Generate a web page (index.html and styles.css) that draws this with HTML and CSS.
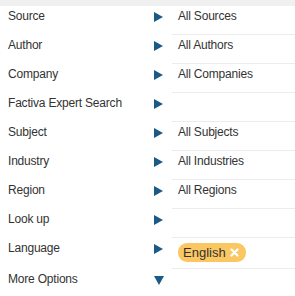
FILE: index.html
```html
<!DOCTYPE html>
<html lang="en">
<head>
  <meta charset="UTF-8">
  <title>Search options</title>
  <link rel="stylesheet" href="styles.css">
</head>
<body>
  <div class="topbar"></div>

  <div class="options">
    <div class="row">
      <span class="label">Source</span>
      <span class="arrow right"></span>
      <span class="value">All Sources</span>
    </div>
    <div class="row">
      <span class="label">Author</span>
      <span class="arrow right"></span>
      <span class="value">All Authors</span>
    </div>
    <div class="row">
      <span class="label">Company</span>
      <span class="arrow right"></span>
      <span class="value">All Companies</span>
    </div>
    <div class="row">
      <span class="label">Factiva Expert Search</span>
      <span class="arrow right"></span>
      <span class="value"></span>
    </div>
    <div class="row">
      <span class="label">Subject</span>
      <span class="arrow right"></span>
      <span class="value">All Subjects</span>
    </div>
    <div class="row">
      <span class="label">Industry</span>
      <span class="arrow right"></span>
      <span class="value">All Industries</span>
    </div>
    <div class="row">
      <span class="label">Region</span>
      <span class="arrow right"></span>
      <span class="value">All Regions</span>
    </div>
    <div class="row">
      <span class="label">Look up</span>
      <span class="arrow right"></span>
      <span class="value"></span>
    </div>
    <div class="row tall">
      <span class="label">Language</span>
      <span class="arrow right"></span>
      <span class="value">
        <span class="pill">English
          <svg class="close" width="9" height="9" viewBox="0 0 9 9">
            <path d="M1.5 1.5 L7.5 7.5 M7.5 1.5 L1.5 7.5" stroke="#fff" stroke-width="2.4" stroke-linecap="round"/>
          </svg>
        </span>
      </span>
    </div>
    <div class="row last">
      <span class="label">More Options</span>
      <span class="arrow down"></span>
      <span class="value"></span>
    </div>
  </div>
</body>
</html>
```

FILE: styles.css
```css
body {
  margin: 0;
  font-family: "Liberation Sans", Arial, sans-serif;
  font-size: 12px;
  letter-spacing: -0.2px;
  color: #333;
  background-color: #fff;
}

.topbar {
  height: 6px;
  background-color: #f0f0f0;
}

.row {
  display: grid;
  grid-template-columns: 150px 22px 1fr;
  height: 29px;
}

.row.tall {
  height: 31px;
}

.label {
  padding: 2px 0 0 8px;
  line-height: 17px;
}

.value {
  padding: 2px 0 0 6px;
  line-height: 17px;
  border-bottom: 1px solid #ececec;
  box-sizing: border-box;
}

.row.tall .value {
  padding-top: 5px;
}

.row.last .value {
  border-bottom: none;
}

.arrow {
  width: 0;
  height: 0;
  margin-top: 6px;
}

.arrow.right {
  margin-left: 4px;
  border-top: 5px solid transparent;
  border-bottom: 5px solid transparent;
  border-left: 9px solid #1b5a86;
}

.arrow.down {
  margin-left: 4px;
  margin-top: 7px;
  border-left: 5px solid transparent;
  border-right: 5px solid transparent;
  border-top: 9px solid #1b5a86;
}

.pill {
  display: inline-flex;
  align-items: center;
  gap: 4px;
  height: 19px;
  padding: 0 7px 0 5px;
  border-radius: 9px;
  background-color: #fbc762;
  color: #333;
  font-size: 13px;
  letter-spacing: 0;
}
```
